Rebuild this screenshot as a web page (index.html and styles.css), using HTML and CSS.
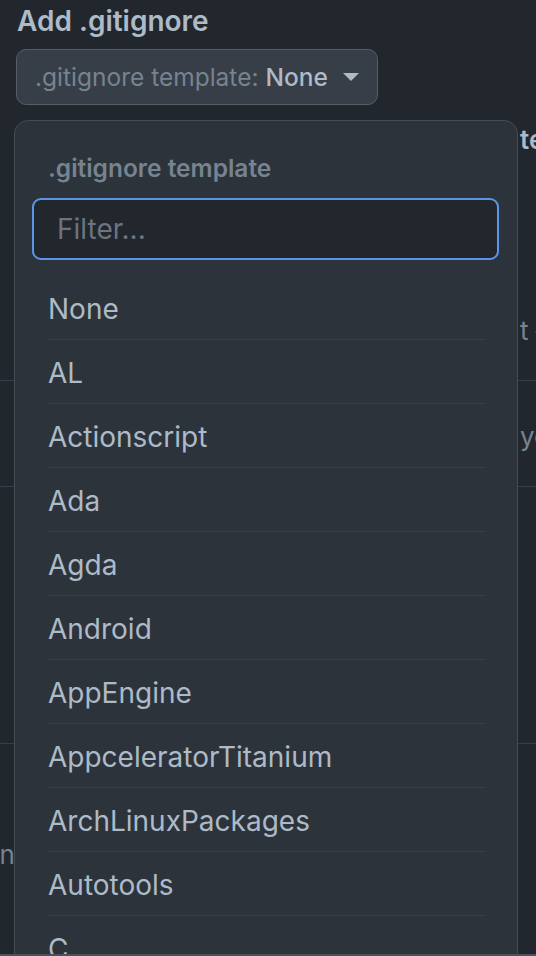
FILE: index.html
```html
<!DOCTYPE html>
<html>
<head>
  <title>Add .gitignore</title>
  <meta charset="utf-8"/>
  <link rel="stylesheet" href="styles.css">
</head>
<body>
  <div class="page">
    <h2 class="section-title">Add .gitignore</h2>
    <button class="select-btn">
      <span class="select-label">.gitignore template:</span>
      <span class="select-value">None</span>
      <span class="caret"></span>
    </button>

    <!-- form content that sits behind the open menu -->
    <div class="behind">
      <div class="behind-row behind-head"><span class="frag strong">template</span></div>
      <div class="behind-row behind-note"><span class="frag">t – licenses</span></div>
      <div class="behind-row behind-line"><span class="frag">your settings</span></div>
      <div class="behind-row behind-gap"></div>
      <div class="behind-row behind-foot"><span class="clip-left">personal account. Done</span></div>
    </div>
  </div>

  <div class="menu">
    <div class="menu-title">.gitignore template</div>
    <input class="menu-filter" type="text" placeholder="Filter...">
    <ul class="menu-list" id="menu-list"></ul>
  </div>

  <div class="bottom-bar"></div>

  <script>
    var templates = ["None", "AL", "Actionscript", "Ada", "Agda", "Android", "AppEngine",
      "AppceleratorTitanium", "ArchLinuxPackages", "Autotools", "C", "C++", "CFWheels"]

    var list = document.getElementById("menu-list")
    for (let t of templates) {
      list.innerHTML += `<li class="menu-item">${t}</li>`
    }
  </script>
</body>
</html>
```

FILE: styles.css
```css
html, body {
	margin: 0;
	padding: 0;
	background: #22272e;
	font-family: Inter, "Noto Sans", "Liberation Sans", sans-serif;
	color: #adbac7;
	overflow: hidden;
}
.page {
	padding: 0 16px;
	height: 956px;
}
.section-title {
	margin: 0;
	padding-top: 3px;
	font-size: 28px;
	line-height: 36px;
	font-weight: 600;
	padding-left: 1px;
}
.select-btn {
	margin-top: 10px;
	display: flex;
	align-items: center;
	height: 56px;
	padding: 0 18px;
	background: #373e47;
	border: 1.5px solid #545d68;
	border-radius: 10px;
	font-family: inherit;
	font-size: 24.5px;
	color: #adbac7;
}
.select-label {
	color: #768390;
	margin-right: 7px;
}
.select-value {
	font-weight: 500;
}
.caret {
	margin-left: 15px;
	width: 0;
	height: 0;
	border-left: 8px solid transparent;
	border-right: 8px solid transparent;
	border-top: 8px solid #adbac7;
}

/* bits of the page under the menu */
.behind {
	margin: 0 -16px;
}
.behind-row {
	display: flex;
	align-items: center;
	white-space: nowrap;
	overflow: hidden;
	font-size: 26px;
	color: #768390;
}
.frag {
	padding-left: 520px;
}
.frag.strong {
	font-weight: 600;
	color: #adbac7;
}
.behind-head {
	height: 36px;
	margin-top: 16px;
}
.behind-note {
	height: 40px;
	margin-top: 153px;
	border-bottom: 1.5px solid #373e47;
	padding-bottom: 30px;
}
.behind-line {
	height: 106px;
	border-bottom: 1.5px solid #373e47;
	padding-top: 6px;
	box-sizing: border-box;
}
.behind-gap {
	height: 256px;
	border-bottom: 1.5px solid #373e47;
}
.behind-foot {
	height: 220px;
}
.clip-left {
	display: flex;
	justify-content: flex-end;
	width: 30px;
	overflow: hidden;
}

/* open menu */
.menu {
	position: absolute;
	top: 120px;
	left: 14px;
	width: 502px;
	height: 900px;
	background: #2d333b;
	border: 1.5px solid #444c56;
	border-radius: 14px;
}
.menu-title {
	padding: 32px 34px 0 33px;
	font-size: 24.5px;
	line-height: 30px;
	font-weight: 600;
	color: #768390;
}
.menu-filter {
	display: block;
	box-sizing: border-box;
	margin: 15px 17px 0 17px;
	width: 467px;
	height: 62px;
	padding: 0 23px;
	background: #22272e;
	border: 2.5px solid #5b95e8;
	border-radius: 9px;
	font-family: inherit;
	font-size: 28px;
	color: #adbac7;
	outline: none;
}
.menu-filter::placeholder {
	color: #6b7480;
}
.menu-list {
	list-style: none;
	margin: 16px 32px 0 32px;
	padding: 0;
}
.menu-item {
	height: 63px;
	line-height: 66px;
	border-bottom: 1.5px solid #3a414a;
	font-size: 28px;
	padding-left: 1px;
}

.bottom-bar {
	position: fixed;
	left: 0;
	right: 0;
	bottom: 0;
	height: 2px;
	background: #4a515a;
}
```
